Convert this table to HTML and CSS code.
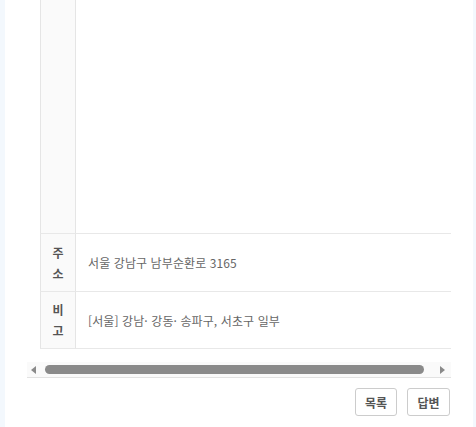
FILE: index.html
```html
<!DOCTYPE html>
<html lang="ko">
<head>
  <meta charset="UTF-8" />
  <meta name="viewport" content="width=device-width, initial-scale=1.0">
  <title>게시글 보기</title>
  <link rel="stylesheet" href="styles.css">
</head>
<body>
  <div class="container">
    <!-- 상세 내용 -->
    <div class="table-wrap">
      <table class="view-table">
        <tbody>
          <tr class="row-content">
            <th></th>
            <td></td>
          </tr>
          <tr class="row-info">
            <th>주소</th>
            <td>서울 강남구 남부순환로 3165</td>
          </tr>
          <tr class="row-info last">
            <th>비고</th>
            <td>[서울] 강남· 강동· 송파구, 서초구 일부</td>
          </tr>
        </tbody>
      </table>
    </div>

    <!-- 가로 스크롤 -->
    <div class="scrollbar">
      <span class="arrow arrow-left"></span>
      <span class="thumb"></span>
      <span class="arrow arrow-right"></span>
    </div>

    <div class="btn-area">
      <button type="button" class="btn">목록</button>
      <button type="button" class="btn">답변</button>
    </div>
  </div>
</body>
</html>
```

FILE: styles.css
```css
html, body {
  margin: 0;
  padding: 0;
}
body {
  font-family: 'Noto Sans CJK KR', 'Noto Sans', sans-serif;
  background: #f3f8fd;
  color: #555;
  font-size: 12px;
}
.container {
  background: #fff;
  margin: 0 3px 0 5px;
  padding: 0 22px;
  min-height: 427px;
  box-sizing: border-box;
}
.table-wrap {
  overflow: hidden;
  padding-left: 13px;
}
.view-table {
  width: 700px;
  table-layout: fixed;
  border-collapse: separate;
  border-spacing: 0;
}
.view-table th,
.view-table td {
  padding: 0;
  border-bottom: 1px solid #e8e8e8;
  vertical-align: middle;
  box-sizing: border-box;
}
.view-table th {
  width: 36px;
  padding: 0 10px;
  background: #fafafa;
  border-left: 1px solid #e5e5e5;
  border-right: 1px solid #e5e5e5;
  font-weight: bold;
  line-height: 21px;
  word-break: break-all;
  text-align: center;
  color: #555;
}
.view-table td {
  padding-left: 12px;
  color: #666;
  letter-spacing: 0.1px;
}
.row-content th,
.row-content td {
  height: 234px;
}
.row-info th,
.row-info td {
  height: 58px;
}
.row-info.last th,
.row-info.last td {
  height: 57px;
}
.scrollbar {
  margin-top: 13px;
  height: 15px;
  background: #fafafa;
  border-bottom: 1px solid #e2e2e2;
  display: flex;
  align-items: center;
}
.arrow {
  width: 0;
  height: 0;
  border-top: 4px solid transparent;
  border-bottom: 4px solid transparent;
}
.arrow-left {
  margin-left: 4px;
  border-right: 5px solid #8a8a8a;
}
.arrow-right {
  margin-left: 16px;
  border-left: 5px solid #8a8a8a;
}
.thumb {
  margin-left: 9px;
  width: 379px;
  height: 9px;
  border-radius: 5px;
  background: #8a8a8a;
}
.btn-area {
  display: flex;
  justify-content: flex-end;
  gap: 10px;
  margin-top: 10px;
  padding-right: 1px;
}
.btn {
  min-width: 42px;
  height: 28px;
  padding: 0 8px;
  background: #fff;
  border: 1px solid #ccc;
  border-radius: 3px;
  font-family: inherit;
  font-size: 12px;
  font-weight: bold;
  color: #555;
  cursor: pointer;
}
.btn + .btn {
  min-width: 43px;
}
```
